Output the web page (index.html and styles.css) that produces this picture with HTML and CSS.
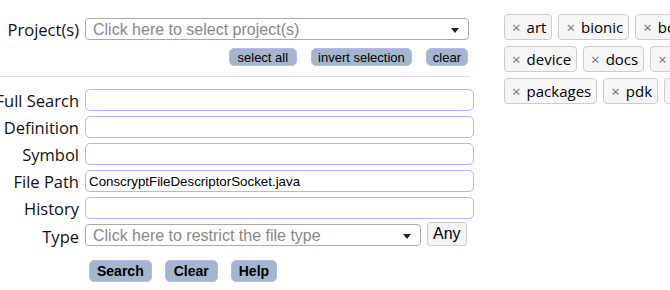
FILE: index.html
```html
<!DOCTYPE html>
<html lang="en">

<head>
    <meta charset="UTF-8">
    <title>Search</title>
    <link rel="stylesheet" href="styles.css">
</head>

<body>
    <div class="page">
        <form class="search-form">
            <div class="row">
                <label class="label">Project(s)</label>
                <div class="select select-wide">
                    <span class="placeholder">Click here to select project(s)</span>
                    <span class="arrow"></span>
                </div>
            </div>
            <div class="project-actions">
                <button type="button" class="small-btn">select all</button>
                <button type="button" class="small-btn">invert selection</button>
                <button type="button" class="small-btn">clear</button>
            </div>

            <div class="divider"></div>

            <div class="fields">
                <div class="row">
                    <label class="label">Full Search</label>
                    <input class="text-input" type="text">
                </div>
                <div class="row">
                    <label class="label">Definition</label>
                    <input class="text-input" type="text">
                </div>
                <div class="row">
                    <label class="label">Symbol</label>
                    <input class="text-input" type="text">
                </div>
                <div class="row">
                    <label class="label">File Path</label>
                    <input class="text-input" type="text" value="ConscryptFileDescriptorSocket.java">
                </div>
                <div class="row">
                    <label class="label">History</label>
                    <input class="text-input" type="text">
                </div>
                <div class="row row-type">
                    <label class="label">Type</label>
                    <div class="select select-type">
                        <span class="placeholder">Click here to restrict the file type</span>
                        <span class="arrow"></span>
                    </div>
                    <button type="button" class="any-btn">Any</button>
                </div>
            </div>

            <div class="submit-row">
                <button type="button" class="main-btn">Search</button>
                <button type="button" class="main-btn">Clear</button>
                <button type="button" class="main-btn">Help</button>
            </div>
        </form>

        <div class="chips">
            <div class="chip-row">
                <span class="chip"><span class="x">×</span>art</span>
                <span class="chip"><span class="x">×</span>bionic</span>
                <span class="chip"><span class="x">×</span>bootable</span>
                <span class="chip"><span class="x">×</span>build</span>
            </div>
            <div class="chip-row">
                <span class="chip"><span class="x">×</span>device</span>
                <span class="chip"><span class="x">×</span>docs</span>
                <span class="chip"><span class="x">×</span>external</span>
                <span class="chip"><span class="x">×</span>frameworks</span>
            </div>
            <div class="chip-row">
                <span class="chip"><span class="x">×</span>packages</span>
                <span class="chip"><span class="x">×</span>pdk</span>
                <span class="chip"><span class="x">×</span>prebuilts</span>
                <span class="chip"><span class="x">×</span>sdk</span>
            </div>
        </div>
    </div>
</body>

</html>
```

FILE: styles.css
```css
* {
    margin: 0;
    padding: 0;
    box-sizing: border-box;
}

body {
    font-family: 'Open Sans', sans-serif;
    color: #000;
    background: #fff;
    overflow: hidden;
}

.page {
    display: flex;
    align-items: flex-start;
}

.search-form {
    width: 474px;
    flex-shrink: 0;
    padding-top: 18px;
}

.row {
    display: flex;
    align-items: center;
    gap: 5px;
    height: 22px;
}

.label {
    width: 80px;
    flex-shrink: 0;
    display: flex;
    justify-content: flex-end;
    padding-right: 1px;
    white-space: nowrap;
    font-size: 16.5px;
    color: #111;
}

.select {
    position: relative;
    height: 22px;
    border: 1px solid #aaa;
    border-radius: 4px;
    background: #fff;
    padding: 1px 0 0 7px;
    display: flex;
    align-items: center;
}

.select-wide {
    width: 384px;
}

.select-type {
    width: 336px;
}

.placeholder {
    font-family: 'Liberation Sans', sans-serif;
    font-size: 16px;
    color: #888;
    white-space: nowrap;
}

.arrow {
    position: absolute;
    right: 9px;
    top: 9px;
    border-left: 4px solid transparent;
    border-right: 4px solid transparent;
    border-top: 5px solid #222;
}

.project-actions {
    display: flex;
    justify-content: flex-end;
    gap: 14px;
    width: 468px;
    margin-top: 8px;
}

.small-btn {
    height: 18px;
    padding: 0 8px;
    font-family: 'Liberation Sans', sans-serif;
    font-size: 13px;
    color: #000;
    background: #a4b6cc;
    border: 1px solid #b8b8f4;
    border-radius: 5px;
}

.small-btn:nth-child(2),
.small-btn:last-child {
    padding: 0 6px;
}

.divider {
    height: 1px;
    width: 470px;
    background: #ddd;
    margin-top: 10px;
}

.fields {
    display: flex;
    flex-direction: column;
    gap: 5px;
    margin-top: 12px;
}

.text-input {
    width: 389px;
    height: 22px;
    border: 1px solid #b4b4fa;
    border-radius: 5px;
    padding: 0 3px;
    font-family: 'Liberation Sans', sans-serif;
    font-size: 13.33px;
    color: #000;
    outline: none;
}

.row-type {
    align-items: flex-end;
}

.row-type .label {
    align-self: center;
    padding-top: 3px;
}

.any-btn {
    height: 24px;
    margin-left: 1px;
    padding: 0 5px;
    font-family: 'Liberation Sans', sans-serif;
    font-size: 16px;
    color: #000;
    background: #f4f4f4;
    border: 1px solid #ccc;
    border-radius: 3px;
}

.submit-row {
    display: flex;
    gap: 13px;
    margin-top: 14px;
    padding-left: 89px;
}

.main-btn {
    height: 22px;
    padding: 0 7px;
    font-family: 'Liberation Sans', sans-serif;
    font-size: 14px;
    font-weight: 700;
    color: #000;
    background: #a4b6cc;
    border: 1px solid #b8b8f4;
    border-radius: 5px;
}

.main-btn:nth-child(2) {
    padding: 0 8px;
}

.chips {
    margin-left: 30px;
    padding-top: 14px;
    display: flex;
    flex-direction: column;
    gap: 6px;
}

.chip-row {
    display: flex;
    gap: 6px;
    white-space: nowrap;
}

.chip {
    display: inline-flex;
    align-items: center;
    height: 26px;
    padding: 0 5px 0 7px;
    font-size: 15px;
    color: #000;
    background: #f6f6f6;
    border: 1px solid #ccc;
    border-radius: 4px;
}

.x {
    color: #777;
    font-size: 15px;
    margin-right: 6px;
}
```
